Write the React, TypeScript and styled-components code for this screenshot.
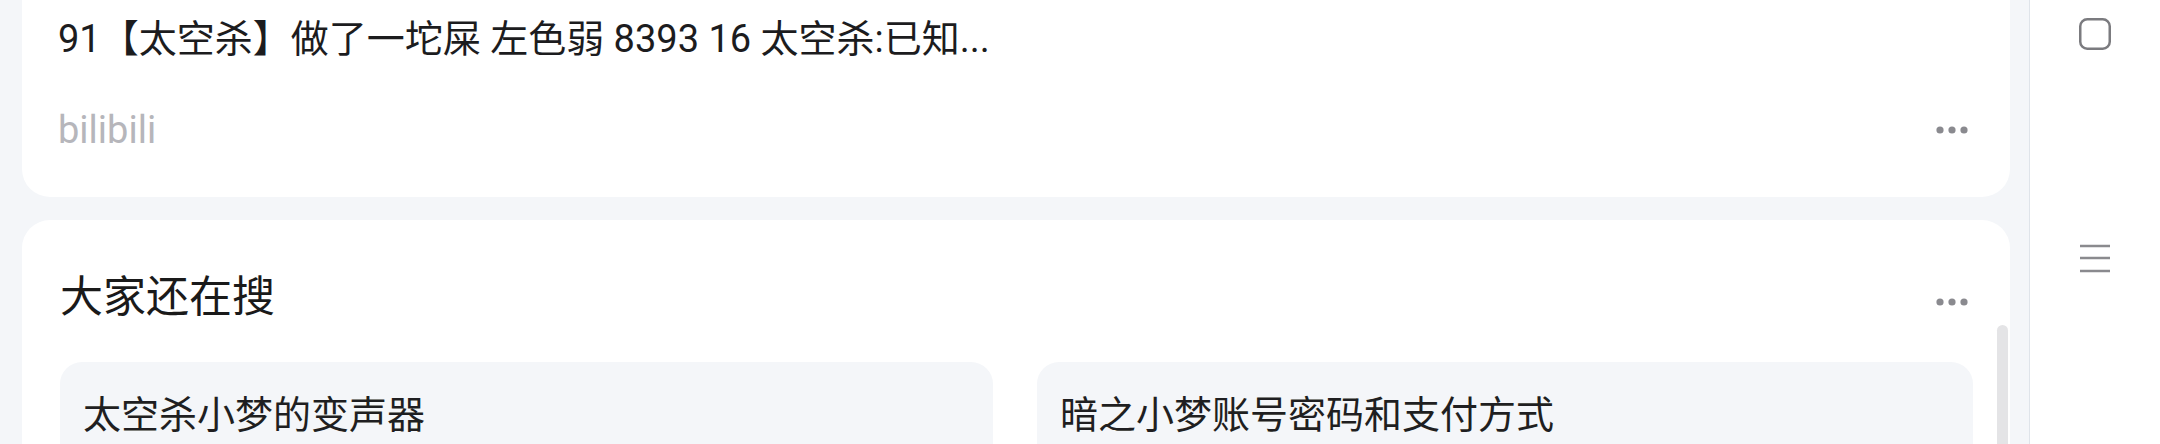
import React from "react";
import styled, { createGlobalStyle } from "styled-components";

const GlobalStyle = createGlobalStyle`
  html, body {
    margin: 0;
    padding: 0;
    height: 444px;
    overflow: hidden;
    background: #f4f6f9;
  }
  body {
    font-family: Roboto, "Noto Sans CJK SC", sans-serif;
    color: #1c1c1e;
  }
`;

const Page = styled.div`
  display: flex;
  width: 2160px;
  height: 444px;
  overflow: hidden;
`;

const Feed = styled.div`
  width: 2029px;
  flex-shrink: 0;
  display: flex;
  flex-direction: column;
  gap: 23px;
  padding: 0 19px 0 22px;
  box-sizing: border-box;
  background: #f4f6f9;
`;

const SideBar = styled.div`
  flex: 1;
  border-left: 1px solid #dfe4ea;
  background: #ffffff;
  display: flex;
  flex-direction: column;
  align-items: center;
  padding-top: 18px;
  gap: 194px;
`;

const Card = styled.div<{ $first?: boolean }>`
  position: relative;
  background: #ffffff;
  border-radius: 28px;
  padding: ${(p) => (p.$first ? "44px 42px 42px 36px" : "47px 37px 0 38px")};
  margin-top: ${(p) => (p.$first ? "-30px" : "0")};
  flex-shrink: 0;
`;

const ResultTitle = styled.div`
  font-size: 38px;
  line-height: 50px;
  white-space: nowrap;
`;

const MetaRow = styled.div`
  display: flex;
  align-items: center;
  justify-content: space-between;
  margin-top: 41px;
  height: 50px;
`;

const Source = styled.span`
  font-size: 38px;
  line-height: 50px;
  color: #b6b6bb;
`;

const Header = styled.div`
  display: flex;
  align-items: center;
  justify-content: space-between;
  padding-right: 5px;
`;

const SectionTitle = styled.h2`
  margin: 0;
  font-size: 43px;
  line-height: 60px;
  font-weight: 400;
  color: #1a1a1a;
`;

const MoreButton = styled.span<{ $shift?: number }>`
  display: flex;
  margin-top: ${(p) => p.$shift ?? 0}px;
`;

const TileGrid = styled.div`
  display: grid;
  grid-template-columns: 933px 936px;
  column-gap: 44px;
  margin-top: 35px;
`;

const Tile = styled.div`
  background: #f4f6f9;
  border-radius: 22px;
  padding: 28px 23px 60px;
  font-size: 38px;
  line-height: 50px;
  color: #1f1f21;
`;

const ScrollThumb = styled.div`
  position: absolute;
  right: 2px;
  top: 105px;
  width: 11px;
  height: 200px;
  border-radius: 6px;
  background: #e4e4e6;
`;

const IconBox = styled.span`
  display: flex;
`;

function Dots() {
  return (
    <svg width="32" height="8" viewBox="0 0 32 8">
      <circle cx="4" cy="4" r="3.6" fill="#8a8a8f" />
      <circle cx="16" cy="4" r="3.6" fill="#8a8a8f" />
      <circle cx="28" cy="4" r="3.6" fill="#8a8a8f" />
    </svg>
  );
}

export default function App() {
  return (
    <>
      <GlobalStyle />
      <Page>
        <Feed>
          <Card $first>
            <ResultTitle>91【太空杀】做了一坨屎 左色弱 8393 16 太空杀:已知...</ResultTitle>
            <MetaRow>
              <Source>bilibili</Source>
              <MoreButton>
                <Dots />
              </MoreButton>
            </MetaRow>
          </Card>
          <Card>
            <Header>
              <SectionTitle>大家还在搜</SectionTitle>
              <MoreButton $shift={10}>
                <Dots />
              </MoreButton>
            </Header>
            <TileGrid>
              <Tile>太空杀小梦的变声器</Tile>
              <Tile>暗之小梦账号密码和支付方式</Tile>
            </TileGrid>
            <ScrollThumb />
          </Card>
        </Feed>
        <SideBar>
          <IconBox>
            <svg width="32" height="32" viewBox="0 0 32 32">
              <rect x="1.25" y="1.25" width="29.5" height="29.5" rx="7" fill="none" stroke="#7b7b7f" strokeWidth="2.5" />
            </svg>
          </IconBox>
          <IconBox>
            <svg width="30" height="30" viewBox="0 0 30 30">
              <line x1="0" y1="2" x2="30" y2="2" stroke="#8a8a8e" strokeWidth="2.5" />
              <line x1="0" y1="14" x2="30" y2="14" stroke="#8a8a8e" strokeWidth="2.5" />
              <line x1="0" y1="27" x2="30" y2="27" stroke="#8a8a8e" strokeWidth="2.5" />
            </svg>
          </IconBox>
        </SideBar>
      </Page>
    </>
  );
}
